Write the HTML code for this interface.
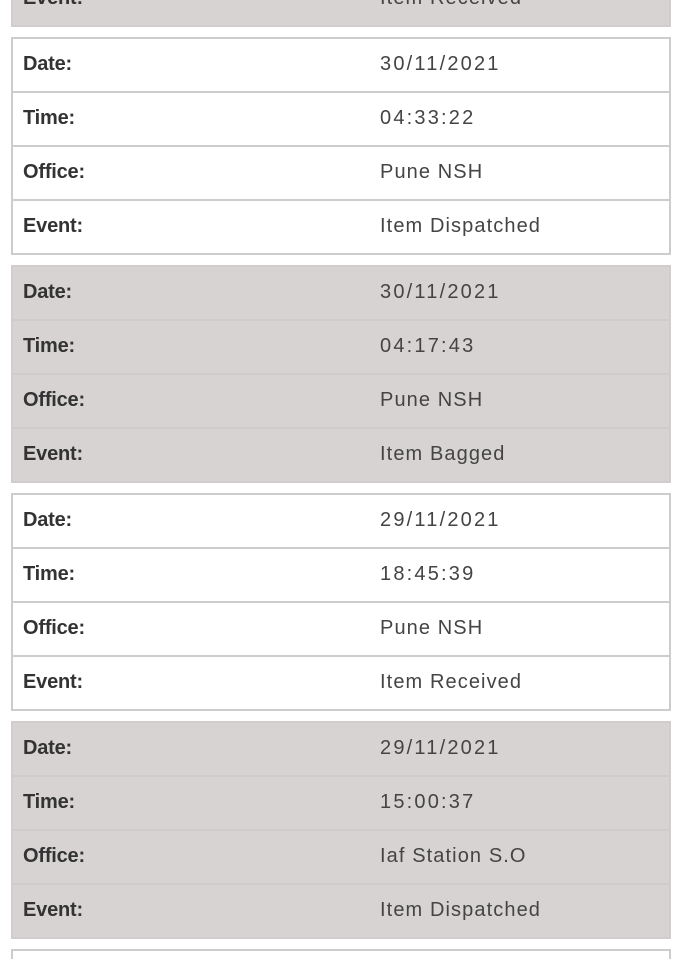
<!DOCTYPE html>
<html><head><style>
html,body{margin:0;padding:0;background:#fff;width:676px;height:959px;overflow:hidden;position:relative;font-family:"Liberation Sans",Arial,sans-serif;}
.t{position:absolute;left:11px;width:656px;border:2px solid #cdcdcd;}
.t.g{background:#d6d3d2;border-color:#d0cdcc;}
.r{height:52px;position:relative;border-top:2px solid #cdcdcd;}
.g .r{border-top-color:#cfcccb;}
.r:first-child{border-top:none;}
.l{position:absolute;left:10px;top:14px;font-weight:bold;font-size:20px;color:#333;letter-spacing:-0.2px;}
.v{position:absolute;left:367px;top:14px;font-size:20px;color:#444;letter-spacing:1.1px;}
.d{letter-spacing:2.2px;}
</style></head><body>
<div class="t g" style="top:-191px"><div class="r"><span class="l">Date:</span></div><div class="r"></div><div class="r"></div><div class="r"><span class="l">Event:</span><span class="v">Item Received</span></div></div>
<div class="t" style="top:37px"><div class="r"><span class="l">Date:</span><span class="v d">30/11/2021</span></div><div class="r"><span class="l">Time:</span><span class="v d">04:33:22</span></div><div class="r"><span class="l">Office:</span><span class="v">Pune NSH</span></div><div class="r"><span class="l">Event:</span><span class="v">Item Dispatched</span></div></div>
<div class="t g" style="top:265px"><div class="r"><span class="l">Date:</span><span class="v d">30/11/2021</span></div><div class="r"><span class="l">Time:</span><span class="v d">04:17:43</span></div><div class="r"><span class="l">Office:</span><span class="v">Pune NSH</span></div><div class="r"><span class="l">Event:</span><span class="v">Item Bagged</span></div></div>
<div class="t" style="top:493px"><div class="r"><span class="l">Date:</span><span class="v d">29/11/2021</span></div><div class="r"><span class="l">Time:</span><span class="v d">18:45:39</span></div><div class="r"><span class="l">Office:</span><span class="v">Pune NSH</span></div><div class="r"><span class="l">Event:</span><span class="v">Item Received</span></div></div>
<div class="t g" style="top:721px"><div class="r"><span class="l">Date:</span><span class="v d">29/11/2021</span></div><div class="r"><span class="l">Time:</span><span class="v d">15:00:37</span></div><div class="r"><span class="l">Office:</span><span class="v">Iaf Station S.O</span></div><div class="r"><span class="l">Event:</span><span class="v">Item Dispatched</span></div></div>
<div class="t" style="top:949px;height:8px;border-bottom:none"></div>
</body></html>
